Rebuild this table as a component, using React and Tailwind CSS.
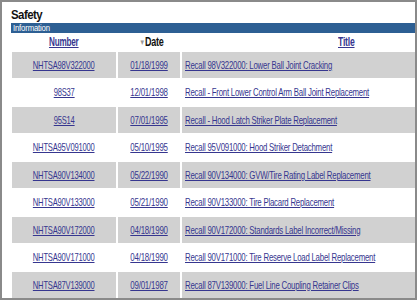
import React from "react";

const recalls = [
  { number: "NHTSA98V322000", date: "01/18/1999", title: "Recall 98V322000: Lower Ball Joint Cracking" },
  { number: "98S37", date: "12/01/1998", title: "Recall - Front Lower Control Arm Ball Joint Replacement" },
  { number: "95S14", date: "07/01/1995", title: "Recall - Hood Latch Striker Plate Replacement" },
  { number: "NHTSA95V091000", date: "05/10/1995", title: "Recall 95V091000: Hood Striker Detachment" },
  { number: "NHTSA90V134000", date: "05/22/1990", title: "Recall 90V134000: GVW/Tire Rating Label Replacement" },
  { number: "NHTSA90V133000", date: "05/21/1990", title: "Recall 90V133000: Tire Placard Replacement" },
  { number: "NHTSA90V172000", date: "04/18/1990", title: "Recall 90V172000: Standards Label Incorrect/Missing" },
  { number: "NHTSA90V171000", date: "04/18/1990", title: "Recall 90V171000: Tire Reserve Load Label Replacement" },
  { number: "NHTSA87V139000", date: "09/01/1987", title: "Recall 87V139000: Fuel Line Coupling Retainer Clips" },
];

const linkCls = "text-[#36368f] underline";

const App = () => {
  return (
    <div
      className="w-[417px] h-[300px] overflow-hidden bg-white border-2 border-[#8a8a8a]"
      style={{ fontFamily: '"Liberation Sans", Arial, sans-serif' }}
    >
      <div className="pl-[9px] pt-[5px] leading-none">
        <h1 className="text-[13px] font-bold leading-[16px] text-[#111]">
          <span className="inline-block scale-x-[0.88] origin-left tracking-[-0.6px]">Safety</span>
        </h1>
        <div className="h-[10px] bg-[#2d5f93] text-white text-[9px] leading-[10px] pl-[2px]">
          <span className="inline-block scale-x-[0.86] origin-left tracking-[-0.2px]">Information</span>
        </div>
        <table className="border-separate border-spacing-[2px] text-[11px] tracking-[-0.3px] -ml-px w-[410px] table-fixed">
          <colgroup>
            <col className="w-[104px]" />
            <col className="w-[62px]" />
            <col />
          </colgroup>
          <thead>
            <tr className="h-[15px] leading-[15px]">
              <th className="font-bold text-[12px] text-center p-0">
                <span className={`${linkCls} inline-block scale-x-[0.68]`}>Number</span>
              </th>
              <th className="font-bold text-[12px] text-center text-[#111] p-0">
                <span className="inline-block scale-x-[0.75] pl-[6px]">
                  <span className="text-[#999] text-[8px] align-[1px]">▼</span>Date
                </span>
              </th>
              <th className="font-bold text-[12px] text-left p-0">
                <span className={`${linkCls} inline-block scale-x-[0.72] origin-left ml-[156px]`}>Title</span>
              </th>
            </tr>
          </thead>
          <tbody>
            {recalls.map((r, i) => {
              const bg = i % 2 === 0 ? "bg-[#d1d1d1]" : "bg-white";
              return (
                <tr key={r.number + i} className="h-[25.5px] leading-[14px]">
                  <td className={`${bg} text-center whitespace-nowrap p-0`}>
                    <span className={`${linkCls} inline-block scale-x-[0.69]`}>{r.number}</span>
                  </td>
                  <td className={`${bg} text-center whitespace-nowrap p-0`}>
                    <span className={`${linkCls} inline-block scale-x-[0.72]`}>{r.date}</span>
                  </td>
                  <td className={`${bg} pl-[3px] whitespace-nowrap overflow-hidden p-0`}>
                    <span className={`${linkCls} inline-block scale-x-[0.71] origin-left`}>{r.title}</span>
                  </td>
                </tr>
              );
            })}
          </tbody>
        </table>
      </div>
    </div>
  );
};

export default App;
